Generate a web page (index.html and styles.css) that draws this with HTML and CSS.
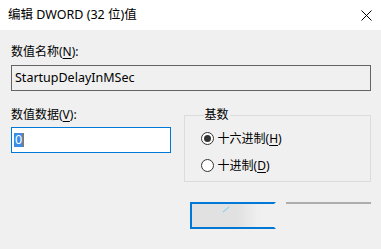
FILE: index.html
```html
<!DOCTYPE html>
<html>
<head>
<meta charset="utf-8">
<link rel="stylesheet" href="styles.css">
</head>
<body>
<div class="dialog">
  <div class="titlebar">
    <span class="title">编辑 DWORD (32 位)值</span>
    <svg class="close" width="11" height="11" viewBox="0 0 11 11"><path d="M0.5 0.5 L10.5 10.5 M10.5 0.5 L0.5 10.5" stroke="#000" stroke-width="1" fill="none"/></svg>
  </div>
  <div class="content">
    <div class="label name-label">数值名称(<u>N</u>):</div>
    <div class="textbox name-box">StartupDelayInMSec</div>
    <div class="row">
      <div class="left-col">
        <div class="label data-label">数值数据(<u>V</u>):</div>
        <div class="textbox data-box"><span class="sel">0</span><span class="caret"></span></div>
      </div>
      <fieldset class="group">
        <legend>基数</legend>
        <div class="radio-row"><span class="radio checked"></span><span>十六进制(<u>H</u>)</span></div>
        <div class="radio-row"><span class="radio"></span><span>十进制(<u>D</u>)</span></div>
      </fieldset>
    </div>
    <div class="buttons">
      <div class="btn ok"><span class="tick"></span></div>
      <div class="btn cancel"></div>
    </div>
  </div>
</div>
</body>
</html>
```
FILE: styles.css
```css
html, body {
  margin: 0;
  padding: 0;
  background: #f0f0f0;
}
body {
  width: 381px;
  height: 249px;
  overflow: hidden;
  font-family: "Noto Sans", "Noto Sans CJK SC", sans-serif;
  font-size: 12px;
  color: #000;
}
.dialog {
  width: 381px;
  height: 249px;
}
.titlebar {
  height: 30px;
  background: #fff;
  display: flex;
  align-items: center;
  justify-content: space-between;
  padding: 0 9px 0 8px;
  box-sizing: border-box;
}
.title {
  font-size: 12.5px;
  line-height: 14px;
}
.close {
  display: block;
}
.content {
  padding: 14px 10px 0 11px;
}
.label {
  line-height: 16px;
  height: 16px;
}
u {
  text-decoration-thickness: 1px;
  text-underline-offset: 2px;
}
.name-box {
  margin-top: 5px;
  height: 26px;
  border: 1px solid #646464;
  background: #f0f0f0;
  box-sizing: border-box;
  padding-left: 3px;
  line-height: 24px;
  font-size: 12.5px;
}
.row {
  display: flex;
  margin-top: 12px;
}
.left-col {
  width: 161px;
  padding-top: 4px;
}
.data-box {
  margin-top: 4px;
  height: 26px;
  border: 1px solid #0078d7;
  background: #fff;
  box-sizing: border-box;
  padding-left: 2px;
  display: flex;
  align-items: center;
}
.sel {
  background: #3a8ee6;
  color: #fff;
  line-height: 14px;
  padding: 0 1px;
  font-size: 12.5px;
}
.caret {
  width: 1px;
  height: 14px;
  background: #c06a20;
}
.group {
  margin: 5px 0 0 13px;
  width: 189px;
  height: 74px;
  box-sizing: border-box;
  border: 1px solid #dcdcdc;
  padding: 9px 0 0 16px;
  min-width: 0;
}
.group legend {
  padding: 0 1px;
  margin-left: 3px;
  line-height: 14px;
}
.radio-row {
  display: flex;
  align-items: center;
  gap: 4px;
  height: 14px;
  margin-bottom: 13px;
}
.radio {
  width: 13px;
  height: 13px;
  border: 1px solid #333;
  border-radius: 50%;
  box-sizing: border-box;
  background: #fff;
  display: flex;
  align-items: center;
  justify-content: center;
}
.radio.checked::after {
  content: "";
  width: 7px;
  height: 7px;
  border-radius: 50%;
  background: #333;
}
.buttons {
  display: flex;
  margin: 20px 0 0 179px;
  gap: 10px;
}
.btn {
  width: 86px;
  height: 27px;
  box-sizing: border-box;
}
.ok {
  border: 2px solid #0078d7;
  background: linear-gradient(to right, #e1e1e1 0%, #e1e1e1 55%, #efefef 80%, #f0f0f0 100%);
  border-right-color: #f0f0f0;
  position: relative;
}
.tick {
  position: absolute;
  left: 30px;
  top: 5px;
  width: 8px;
  height: 1px;
  background: #7fd0f0;
  transform: rotate(-40deg);
}
.cancel {
  border-top: 2px solid #adadad;
  background: #f0f0f0;
}
```
